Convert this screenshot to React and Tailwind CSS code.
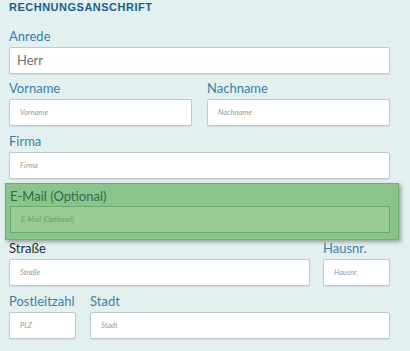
import React from "react";

const labelCls =
  "block h-4 text-[13px] leading-4 text-[#3f7fa6] mb-[3px] whitespace-nowrap";
const inputCls =
  "h-[27px] w-full rounded-[2px] border border-[#c3c9c9] bg-white px-[10px] text-[7.5px] italic text-[#9a9a9a] shadow-[0_1px_1px_rgba(0,0,0,0.08)] flex items-center";

function Field({ label, placeholder, className = "", dark = false }) {
  return (
    <div className={className}>
      <span className={dark ? labelCls.replace("text-[#3f7fa6]", "text-[#2b2b2b]") : labelCls}>
        {label}
      </span>
      <div className={inputCls}>{placeholder}</div>
    </div>
  );
}

export default function App() {
  return (
    <div
      className="w-[410px] h-[351px] overflow-hidden bg-[#e2f0f0] pl-[9px] pr-[20px]"
      style={{ fontFamily: "Lato, 'Liberation Sans', sans-serif" }}
    >
      <h2 className="h-[28px] font-['Liberation_Sans',sans-serif] text-[11px] font-bold leading-[14px] tracking-[0.5px] text-[#1c5d8c]">
        RECHNUNGSANSCHRIFT
      </h2>

      <div>
        <span className={labelCls}>Anrede</span>
        <div className="h-[27px] w-full rounded-[2px] border border-[#c3c9c9] bg-white px-[7px] text-[13px] text-[#707070] flex items-center shadow-[0_1px_1px_rgba(0,0,0,0.08)]">
          Herr
        </div>
      </div>

      <div className="mt-[6px] flex gap-[15px]">
        <Field label="Vorname" placeholder="Vorname" className="w-[183px]" />
        <Field label="Nachname" placeholder="Nachname" className="w-[183px]" />
      </div>

      <Field label="Firma" placeholder="Firma" className="mt-[7px]" />

      <div className="mt-[4px] -ml-[4px] -mr-[9px] border border-[#74ab76] bg-[#88c48b] pl-[4px] pr-[8px] pt-[4px] pb-[6px] shadow-[2px_2px_4px_rgba(0,0,0,0.35)]">
        <span className="block h-4 text-[13px] leading-4 text-[#2f6d4c] mb-[2px] whitespace-nowrap">
          E-Mail (Optional)
        </span>
        <div className="h-[27px] w-full border border-[#6fa66f] bg-[#99cc95] px-[10px] text-[7.5px] italic text-[#6a9a6a] flex items-center">
          E-Mail (Optional)
        </div>
      </div>

      <div className="flex gap-[13px]">
        <Field label="Straße" placeholder="Straße" className="w-[301px]" dark />
        <Field label="Hausnr." placeholder="Hausnr." className="w-[67px]" />
      </div>

      <div className="mt-[7px] flex gap-[14px]">
        <Field label="Postleitzahl" placeholder="PLZ" className="w-[67px]" />
        <Field label="Stadt" placeholder="Stadt" className="w-[300px]" />
      </div>
    </div>
  );
}
